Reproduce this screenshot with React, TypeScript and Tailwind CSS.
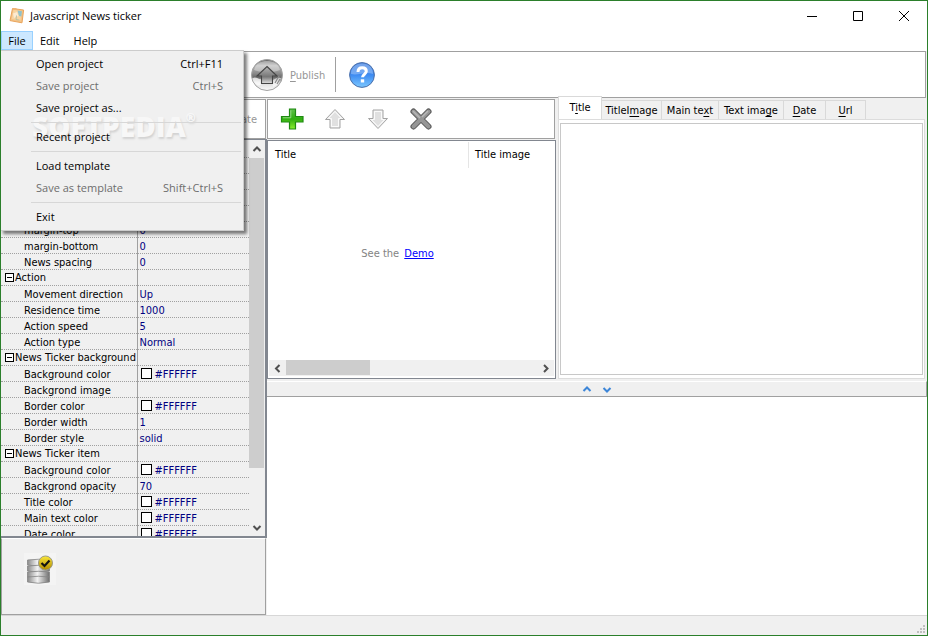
import { useState } from "react";

type Property = {
  name?: string;
  value?: string;
  group?: boolean;
  color?: boolean;
};

const properties: Property[] = [
  {},
  {},
  {},
  {},
  {},
  { name: "margin-top", value: "0" },
  { name: "margin-bottom", value: "0" },
  { name: "News spacing", value: "0" },
  { name: "Action", group: true },
  { name: "Movement direction", value: "Up" },
  { name: "Residence time", value: "1000" },
  { name: "Action speed", value: "5" },
  { name: "Action type", value: "Normal" },
  { name: "News Ticker background", group: true },
  { name: "Background color", value: "#FFFFFF", color: true },
  { name: "Backgrond image", value: "" },
  { name: "Border color", value: "#FFFFFF", color: true },
  { name: "Border width", value: "1" },
  { name: "Border style", value: "solid" },
  { name: "News Ticker item", group: true },
  { name: "Background color", value: "#FFFFFF", color: true },
  { name: "Backgrond opacity", value: "70" },
  { name: "Title color", value: "#FFFFFF", color: true },
  { name: "Main text color", value: "#FFFFFF", color: true },
  { name: "Date color", value: "#FFFFFF", color: true },
];

const fileMenu = [
  [
    { label: "Open project", keys: "Ctrl+F11" },
    { label: "Save project", keys: "Ctrl+S", disabled: true },
    { label: "Save project as..." },
  ],
  [{ label: "Recent project" }],
  [
    { label: "Load template" },
    { label: "Save as template", keys: "Shift+Ctrl+S", disabled: true },
  ],
  [{ label: "Exit" }],
];

// label split around the underlined access key
const tabs = [
  { id: "title", parts: ["T", "i", "tle"], width: "w-[42px]" },
  { id: "titleImage", parts: ["TitleI", "m", "age"], width: "w-[59px]" },
  { id: "mainText", parts: ["Main te", "x", "t"], width: "w-14" },
  { id: "textImage", parts: ["Text ima", "g", "e"], width: "w-16" },
  { id: "date", parts: ["", "D", "ate"], width: "w-[41px]" },
  { id: "url", parts: ["", "U", "rl"], width: "w-[39px]" },
];

function AppIcon() {
  return (
    <svg width="16" height="18" viewBox="0 0 16 18" aria-hidden="true">
      <path d="M3.5 1.5 14.6 3 13 15.8 1 13.6z" fill="#f6c386" stroke="#e8a45c" strokeWidth="1" />
      <path d="M4.500 3 12.500 4 11.500 13.500 2.800 12z" fill="#f7d5a3" />
      <path d="M8.500 3.500 13 4.300 12.300 9.500 10 9z" fill="#8fc1cb" />
      <path d="M4 6.500 8 5l1.500 4-4.500 2z" fill="#fcebd2" />
      <path d="M7.500 8.500 7 12.500l3.500.6" fill="none" stroke="#b9c2a4" />
      <path d="M4.500 1h3l-.3 2h-3z" fill="#efb475" />
    </svg>
  );
}

function PublishIcon() {
  return (
    <svg width="34" height="34" viewBox="0 0 34 34" aria-hidden="true">
      <defs>
        <linearGradient id="pubBall" x1="0" y1="0" x2="0" y2="1">
          <stop offset="0" stopColor="#5d5d5d" />
          <stop offset=".2" stopColor="#b8b8b8" />
          <stop offset=".45" stopColor="#8a8a8a" />
          <stop offset=".58" stopColor="#6a6a6a" />
          <stop offset=".75" stopColor="#dcdcdc" />
          <stop offset="1" stopColor="#fafafa" />
        </linearGradient>
        <linearGradient id="pubHouse" x1="0" y1="0" x2="0" y2="1">
          <stop offset="0" stopColor="#b5b5b5" />
          <stop offset=".6" stopColor="#777" />
          <stop offset="1" stopColor="#e0e0e0" />
        </linearGradient>
      </defs>
      <circle cx="17" cy="17" r="15.5" fill="url(#pubBall)" stroke="#a2a2a2" />
      <path d="M4 12C6 5 11 3 17 3s11 2 13 9c-8 3-18 3-26 0z" fill="#fff" opacity=".35" />
      <path d="M2.5 20c4-2 6 2 9 1v5c-2 3-5 1-6 0-2-2-3-4-3-6z" fill="#fff" opacity=".75" />
      <path d="M31 20c-2 6-5 8-8 9l-1-7c3 0 5-4 9-2z" fill="#fff" opacity=".6" />
      <path d="M17 8.500 27 18h-4.500v7.500h-11V18H7z" fill="url(#pubHouse)" stroke="#454545" strokeWidth="1.1" />
      <path d="m25 25 4-7m-2 8 3-5" stroke="#8a8a8a" strokeWidth="1.2" />
    </svg>
  );
}

function HelpIcon() {
  return (
    <svg width="28" height="28" viewBox="0 0 28 28" aria-hidden="true">
      <defs>
        <linearGradient id="helpBall" x1="0" y1="0" x2="0" y2="1">
          <stop offset="0" stopColor="#3f7fe0" />
          <stop offset=".5" stopColor="#3d8bf2" />
          <stop offset="1" stopColor="#7cc8ff" />
        </linearGradient>
      </defs>
      <circle cx="14" cy="14" r="12.4" fill="url(#helpBall)" stroke="#4a6ea8" />
      <path d="M3 13C3 6 8 2.500 14 2.500S25 6 25 13c-7-3-15 2-22 0z" fill="#fff" opacity=".28" />
      <path d="M10 11c0-2.800 1.800-4.200 4.200-4.200S18.300 8.200 18.300 10.300c0 2.900-3.800 3.200-3.800 6" fill="none" stroke="#fff" strokeWidth="3" />
      <rect x="12.800" y="18.300" width="3.400" height="3.200" fill="#fff" />
    </svg>
  );
}

function AddIcon() {
  return (
    <svg width="24" height="24" viewBox="0 0 24 24" aria-hidden="true">
      <defs>
        <linearGradient id="plus" x1="0" y1="0" x2="0" y2="1">
          <stop offset="0" stopColor="#5fc04c" />
          <stop offset=".5" stopColor="#2fae10" />
          <stop offset="1" stopColor="#8cf030" />
        </linearGradient>
      </defs>
      <path d="M9.500 2h6v7.500h7.500v5.500h-7.500v7h-6v-7H1.500V9.500h8z" fill="url(#plus)" stroke="#1f8a12" strokeWidth="1.200" />
      <path d="M10.800 3.300v7.500H2.800" fill="none" stroke="#a8e39a" strokeWidth=".8" />
    </svg>
  );
}

function ArrowIcon({ down }: { down?: boolean }) {
  return (
    <svg width="22" height="22" viewBox="0 0 22 22" className={down ? "rotate-180" : ""} aria-hidden="true">
      <path d="M11 1.500 20.500 11.500H16v8.500H6v-8.500H1.500z" fill="#f0f0f0" stroke="#a3a3a3" strokeLinejoin="round" />
      <path d="M11 3.500 17.500 10.500H14.500v8h-7v-8H4.500z" fill="#e0e0e0" stroke="#fafafa" />
    </svg>
  );
}

function RemoveIcon() {
  return (
    <svg width="24" height="24" viewBox="0 0 24 24" aria-hidden="true">
      <path d="m4.500 4.500 15 15m0-15-15 15" stroke="#585858" strokeWidth="6" strokeLinecap="round" />
      <path d="m4.500 4.500 15 15m0-15-15 15" stroke="#969696" strokeWidth="4" strokeLinecap="round" />
      <path d="m4 4 7 7m8-7-6 6" stroke="#b8b8b8" strokeWidth="1.500" />
    </svg>
  );
}

function DatabaseIcon() {
  return (
    <svg width="32" height="32" viewBox="0 0 32 32" aria-hidden="true">
      <defs>
        <linearGradient id="disk" x1="0" y1="0" x2="1" y2="0">
          <stop offset="0" stopColor="#8a8a8a" />
          <stop offset=".45" stopColor="#f2f2f2" />
          <stop offset="1" stopColor="#6e6e6e" />
        </linearGradient>
        <linearGradient id="badge" x1="0" y1="0" x2="0" y2="1">
          <stop offset="0" stopColor="#fbe83a" />
          <stop offset="1" stopColor="#b08a00" />
        </linearGradient>
      </defs>
      <rect width="32" height="32" fill="#f4f4f4" />
      {[6, 12, 18, 23].map((y) => (
        <path
          key={y}
          d={`M3.500 ${y + 1}q11-1.500 22 0v5q-11 2.500-22 0z`}
          fill="url(#disk)"
          stroke="#858585"
          strokeWidth=".8"
        />
      ))}
      <circle cx="21.500" cy="10" r="7" fill="url(#badge)" stroke="#9a9a8a" />
      <path d="m17.500 10 3 3 5-5.500" fill="none" stroke="#111" strokeWidth="2.200" />
    </svg>
  );
}

const chevrons = {
  up: "M1.500 6 5 2.500 8.500 6",
  down: "M1.500 3 5 6.500 8.500 3",
  left: "M6.500 1 3 4.500 6.500 8",
  right: "M3 1 6.500 4.500 3 8",
};

function Chevron({ dir, color = "#505050" }: { dir: keyof typeof chevrons; color?: string }) {
  return (
    <svg width="10" height="9" viewBox="0 0 10 9" aria-hidden="true">
      <path d={chevrons[dir]} fill="none" stroke={color} strokeWidth="2" />
    </svg>
  );
}

function FileMenu() {
  return (
    <div
      role="menu"
      className="absolute -left-px top-[19px] z-20 w-[244px] border border-[#ccc] bg-[#f0f0f0] py-0.5 shadow-[3px_3px_3px_rgba(0,0,0,0.5)]"
    >
      <span
        aria-hidden="true"
        className="absolute left-[31px] top-[57px] flex items-start font-['Open_Sans',sans-serif] text-[28px] font-extrabold leading-9 text-[#f7f7f7] [text-shadow:1px_2px_2px_#d2d2d2]"
      >
        SOFTPEDIA<span className="text-xs leading-5">®</span>
      </span>
      {fileMenu.map((section, i) => (
        <div key={i} className="relative">
          {i > 0 && <div className="my-[3px] ml-[30px] mr-0.5 h-px bg-[#d7d7d7]" />}
          {section.map((item) => (
            <button
              key={item.label}
              type="button"
              role="menuitem"
              disabled={"disabled" in item}
              className="flex h-[22px] w-full items-center justify-between pl-[35px] pr-5 hover:bg-[#91c9f7] disabled:text-[#6d6d6d]"
            >
              <span>{item.label}</span>
              {"keys" in item && <span>{item.keys}</span>}
            </button>
          ))}
        </div>
      ))}
    </div>
  );
}

function PropertyGrid() {
  return (
    <div className="flex min-h-0 flex-1 border-b-2 border-r-2 border-t border-[#828790] bg-[#f0f0f0] pt-px">
      <div className="min-w-0 flex-1 overflow-hidden">
        <table className="w-full table-fixed border-collapse">
          <tbody>
            {properties.map((p, i) => (
              <tr key={i} className="h-4">
                <td className="h-4 w-[136px] border-b border-r border-dotted border-[#a0a0a0] p-0 [border-right-style:solid]">
                  {p.group ? (
                    <span className="flex h-[15px] items-center gap-px pl-1">
                      <span className="flex size-[9px] items-center justify-center border border-black bg-white">
                        <span className="h-px w-[5px] bg-black" />
                      </span>
                      <span className="whitespace-nowrap leading-[17px]">{p.name}</span>
                    </span>
                  ) : (
                    <span className="block h-[15px] whitespace-nowrap pl-[23px] leading-[17px]">{p.name}</span>
                  )}
                </td>
                <td className="h-4 border-b border-dotted border-[#a0a0a0] p-0 text-[#000080]">
                  <span className="flex h-[15px] items-center gap-[3px] pl-0.5">
                    {p.color && <span className="ml-px size-[11px] border border-black bg-white" />}
                    <span className="h-[15px] leading-[17px]">{p.value}</span>
                  </span>
                </td>
              </tr>
            ))}
          </tbody>
        </table>
      </div>
      <div className="flex w-4 flex-col">
        <button type="button" aria-label="Scroll up" className="flex h-[17px] items-center justify-center">
          <Chevron dir="up" />
        </button>
        <div className="flex-1">
          <div className="mr-px h-[86%] bg-[#cdcdcd]" />
        </div>
        <button type="button" aria-label="Scroll down" className="flex h-[17px] items-center justify-center">
          <Chevron dir="down" />
        </button>
      </div>
    </div>
  );
}

function NewsList() {
  return (
    <div className="flex min-h-0 flex-1 flex-col border border-[#828790] bg-white px-px pb-0.5 pt-px">
      <div className="flex h-[26px] items-center">
        <span className="h-full w-[200px] border-r border-[#e5e5e5] pl-1.5 leading-[26px]">Title</span>
        <span className="pl-1.5">Title image</span>
      </div>
      <div className="flex-1 pr-7 pt-[78px] text-center text-[#838383]">
        See the{" "}
        <a href="#demo" className="ml-0.5 text-[#0000ff] underline">
          Demo
        </a>
      </div>
      <div className="flex h-4 items-stretch bg-[#f0f0f0]">
        <button type="button" aria-label="Scroll left" className="flex w-[17px] items-center justify-center">
          <Chevron dir="left" />
        </button>
        <div className="flex-1 pb-px">
          <div className="h-full w-1/3 bg-[#cdcdcd]" />
        </div>
        <button type="button" aria-label="Scroll right" className="flex w-[17px] items-center justify-center">
          <Chevron dir="right" />
        </button>
      </div>
    </div>
  );
}

function Editor() {
  const [active, setActive] = useState("title");
  const [text, setText] = useState("");

  return (
    <div className="flex min-w-0 flex-1 flex-col px-0.5">
      <div role="tablist" className="flex h-[21px] items-end">
        {tabs.map(({ id, parts, width }) => (
          <button
            key={id}
            type="button"
            role="tab"
            aria-selected={active === id}
            onClick={() => setActive(id)}
            className={`${width} box-content whitespace-nowrap border-r border-t border-[#d9d9d9] ${
              active === id ? "h-[22px] border-l bg-white" : "h-4 bg-[#f0f0f0] pt-0.5"
            }`}
          >
            {parts[0]}
            <span className="underline underline-offset-2">{parts[1]}</span>
            {parts[2]}
          </button>
        ))}
      </div>
      <div className="flex min-h-0 flex-1 border border-[#dcdcdc] bg-white px-px py-[3px]">
        <textarea
          aria-label="News text"
          value={text}
          onChange={(e) => setText(e.target.value)}
          className="w-full resize-none border border-[#c8c8c8] bg-white p-1 outline-none"
        />
      </div>
    </div>
  );
}

export default function App() {
  return (
    <div className="flex h-screen flex-col overflow-hidden border border-[#2b7f2b] bg-[#f0f0f0] font-['DejaVu_Sans_Condensed','DejaVu_Sans',sans-serif] text-[11px] leading-4 text-black">
      <header className="bg-white font-['Open_Sans',sans-serif]">
        <div className="flex h-[30px] items-center">
          <span className="ml-2 mr-[5px]">
            <AppIcon />
          </span>
          <h1 className="flex-1">Javascript News ticker</h1>
          <button type="button" aria-label="Minimize" className="flex h-full w-[46px] items-center justify-center">
            <svg width="10" height="10" viewBox="0 0 10 10">
              <path d="M0 5.500h10" stroke="#000" />
            </svg>
          </button>
          <button type="button" aria-label="Maximize" className="flex h-full w-[46px] items-center justify-center">
            <svg width="10" height="10" viewBox="0 0 10 10">
              <path d="M.5.5h9v9h-9z" fill="none" stroke="#000" />
            </svg>
          </button>
          <button type="button" aria-label="Close" className="flex h-full w-[46px] items-center justify-center">
            <svg width="10" height="10" viewBox="0 0 10 10">
              <path d="m0 0 10 10M10 0 0 10" stroke="#000" />
            </svg>
          </button>
        </div>
        <nav className="flex h-5">
          <div className="relative">
            <button type="button" aria-haspopup="menu" aria-expanded="true" className="h-[19px] w-8 border border-[#99d1ff] bg-[#cce8ff] leading-4">
              File
            </button>
            <FileMenu />
          </div>
          <button type="button" className="h-[19px] px-[7px]">
            Edit
          </button>
          <button type="button" className="h-[19px] px-[7px]">
            Help
          </button>
        </nav>
      </header>

      <div className="mr-px flex h-[47px] items-center border border-[#a0a0a0] bg-white pl-[248px]">
        <button type="button" disabled className="flex items-center gap-1.5 text-[#969696]">
          <PublishIcon />
          <span className="pt-0.5">
            <span className="underline underline-offset-2">P</span>ublish
          </span>
        </button>
        <span className="ml-2.5 mr-3 h-[35px] w-px bg-[#a0a0a0]" />
        <button type="button" aria-label="Help">
          <HelpIcon />
        </button>
      </div>

      <main className="flex min-h-0 flex-1">
        <aside className="flex w-[266px] shrink-0 flex-col pt-px">
          <div className="mr-px flex h-10 items-center justify-end border border-[#a0a0a0] bg-white pr-2">
            <button type="button" disabled className="pt-0.5 text-[#969696]">
              Update
            </button>
          </div>
          <PropertyGrid />
          <div className="mr-px h-[77px] border border-[#a0a0a0] border-t-white pl-[22px] pt-3.5">
            <button type="button" aria-label="Check database">
              <DatabaseIcon />
            </button>
          </div>
        </aside>

        <section className="flex min-w-0 flex-1 flex-col">
          <div className="flex h-[281px]">
            <div className="flex w-[289px] shrink-0 flex-col pt-px">
              <div className="mb-px mr-px flex h-10 items-center border border-[#a0a0a0] bg-white pl-3">
                <button type="button" aria-label="Add news" className="w-11">
                  <AddIcon />
                </button>
                <button type="button" aria-label="Move up" disabled className="w-[43px]">
                  <ArrowIcon />
                </button>
                <button type="button" aria-label="Move down" disabled className="w-[42px]">
                  <ArrowIcon down />
                </button>
                <button type="button" aria-label="Remove news">
                  <RemoveIcon />
                </button>
              </div>
              <NewsList />
            </div>
            <Editor />
          </div>
          <div className="mt-0.5 flex h-4 items-center justify-center gap-2.5 border-b border-r border-t border-[#a0a0a0] border-t-white">
            <button type="button" aria-label="Collapse preview">
              <Chevron dir="up" color="#3d86d8" />
            </button>
            <button type="button" aria-label="Expand preview">
              <Chevron dir="down" color="#3d86d8" />
            </button>
          </div>
          <div className="flex-1 bg-white" />
        </section>
      </main>

      <footer className="flex h-5 items-end justify-end border-t border-[#d7d7d7] p-0.5">
        <svg width="8" height="8" viewBox="0 0 8 8" fill="#bfbfbf" aria-hidden="true">
          <path d="M6 0h2v2H6zM3 3h2v2H3zM6 3h2v2H6zM0 6h2v2H0zM3 6h2v2H3zM6 6h2v2H6z" />
        </svg>
      </footer>
    </div>
  );
}
